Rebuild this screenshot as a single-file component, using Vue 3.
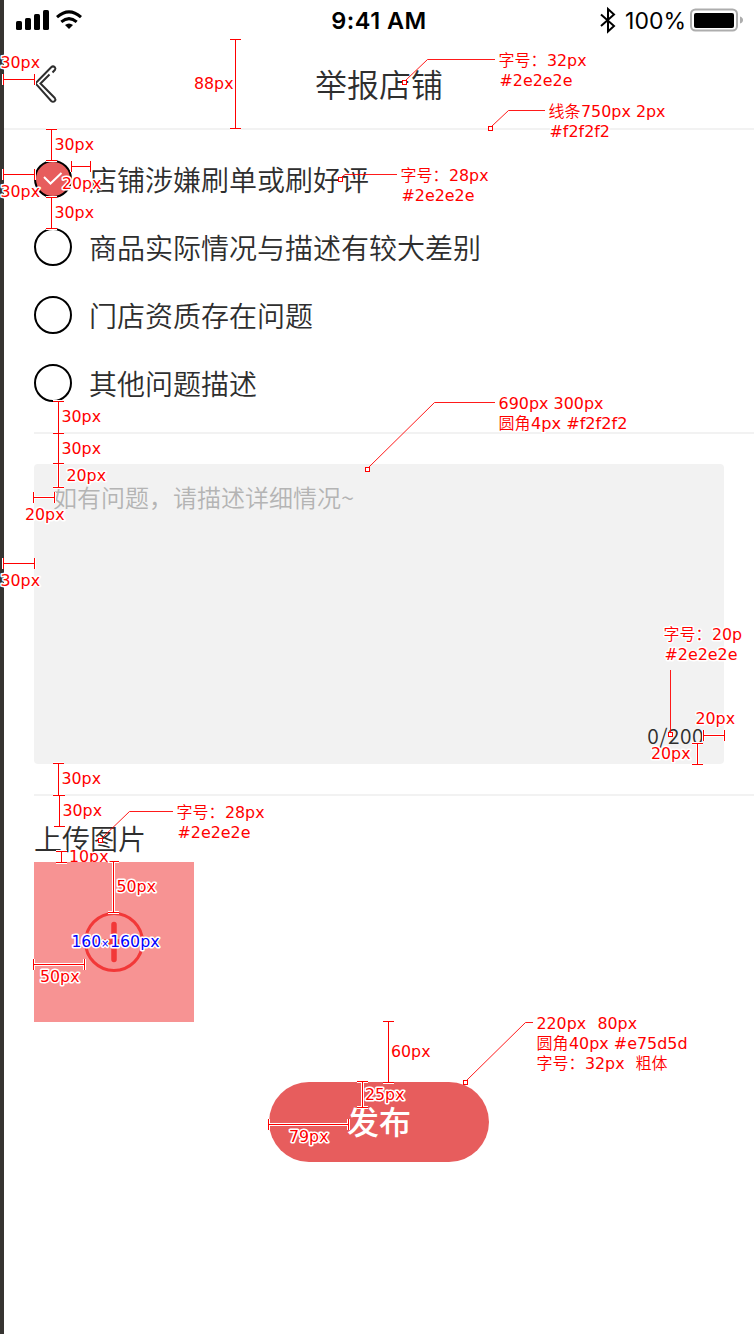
<script setup>
const options = [
  { text: '店铺涉嫌刷单或刷好评', checked: true },
  { text: '商品实际情况与描述有较大差别', checked: false },
  { text: '门店资质存在问题', checked: false },
  { text: '其他问题描述', checked: false },
]

// vertical measures: x, top, bottom
const vertical = [
  [235, 39, 128], [51, 129, 160], [51, 197, 228], [58, 401, 433], [58, 433, 463],
  [58, 463, 487], [697, 743, 764], [58, 763, 795], [59, 795, 826], [61, 851, 862],
  [113, 861, 912], [388, 1021, 1082], [362, 1081, 1107],
].map(([x, a, b]) => `M${x + 0.5} ${a}V${b + 1}M${x - 5} ${a + 0.5}h11M${x - 5} ${b + 0.5}h11`)

// horizontal measures: y, left, right
const horizontal = [
  [79, 3, 34], [174, 3, 34], [166, 71, 90], [497, 33, 54], [563, 3, 34],
  [735, 703, 724], [964, 33, 84], [1124, 268, 348],
].map(([y, a, b]) => `M${a} ${y + 0.5}H${b + 1}M${a + 0.5} ${y - 5}v11M${b + 0.5} ${y - 5}v11`)

const measures = [...vertical, ...horizontal]

const sizes = [
  ['88px', 194.5, 89], ['30px', 55, 150], ['30px', 55, 218], ['30px', 62, 422],
  ['30px', 62, 454], ['20px', 67, 481], ['20px', 651.5, 759], ['30px', 62, 784],
  ['30px', 63, 816], ['50px', 117, 892], ['60px', 391.5, 1057],
  ['25px', 365.5, 1100], ['30px', 1, 68], ['30px', 1, 197], ['20px', 62.5, 189],
  ['20px', 25.5, 520], ['30px', 1, 586], ['20px', 696, 724], ['50px', 40.5, 982],
  ['79px', 289.5, 1142],
]

const leaders = [
  { x: 404, y: 82, d: 'M406 80L427.5 59.5H495' },
  { x: 490, y: 128, d: 'M492 126L508.5 110.5H545' },
  { x: 340, y: 179, d: 'M342 177L345 174.5H397' },
  { x: 367, y: 469, d: 'M369 467L434.5 402.5H495' },
  { x: 670, y: 734, d: 'M670.5 732V670' },
  { x: 100, y: 840, d: 'M102 838L129.5 811.5H173' },
  { x: 465, y: 1082, d: 'M467 1080L525.5 1022.5H533' },
]

// text, x, baseline, width
const notes = [
  ['字号：', 498.5, 66, 48], ['32px', 547, 66, 39.5], ['#2e2e2e', 499.5, 86, 73],
  ['线条', 548.5, 117, 32], ['750px 2px', 581, 117, 84.5], ['#f2f2f2', 549.5, 137, 60.5],
  ['字号：', 400.5, 181, 48], ['28px', 449, 181, 39.5], ['#2e2e2e', 401.5, 201, 73],
  ['690px 300px', 498.5, 409, 105],
  ['圆角', 498.5, 429, 32], ['4px #f2f2f2', 531, 429, 96.5],
  ['字号：', 663.5, 640, 48], ['#2e2e2e', 664.5, 660, 73],
  ['字号：', 176.5, 818, 48], ['28px', 225, 818, 39.5], ['#2e2e2e', 177.5, 838, 73],
  ['220px', 536.5, 1029, 49.5], ['80px', 597.5, 1029, 39.5],
  ['圆角', 536.5, 1049, 32], ['40px #e75d5d', 569, 1049, 118.5],
  ['字号：', 536.5, 1069, 48], ['32px', 585, 1069, 39.5], ['粗体', 635.5, 1069, 32],
]
</script>

<template>
  <div class="page">
    <div class="edge"></div>
    <main class="screen">
      <header class="status">
        <div class="signal">
          <svg width="68" height="22" viewBox="0 0 68 22">
            <rect x="0" y="12" width="6" height="9" rx="1.6" />
            <rect x="9" y="9" width="6" height="12" rx="1.6" />
            <rect x="18" y="5" width="6" height="16" rx="1.6" />
            <rect x="27" y="1" width="6" height="20" rx="1.6" />
            <g fill="none" stroke="#000" stroke-width="3">
              <path d="M41 8.2Q53 -2.4 65 8.2" />
              <path d="M45.3 12.9Q53 6.4 60.7 12.9" />
            </g>
            <path d="M49 16Q53 12.8 57 16L53 20Z" />
          </svg>
        </div>
        <div class="time">9:41 AM</div>
        <div class="power">
          <svg class="bluetooth" width="16" height="28" viewBox="0 0 16 28">
            <path d="M1 8.5L14 20L8 25.5V3L14 8.5L1 20" fill="none" stroke="#000" stroke-width="2" />
          </svg>
          <span class="percent">100%</span>
          <svg width="54" height="24" viewBox="0 0 54 24">
            <rect x="1" y="1.5" width="46" height="21" rx="4.5" fill="none" stroke="#adadad" stroke-width="2" />
            <rect x="4" y="5" width="40" height="15" rx="2" />
            <path d="M50 8.5Q53 9.5 53 12T50 15.5Z" fill="#adadad" />
          </svg>
        </div>
      </header>

      <nav class="nav">
        <svg class="back" width="24" height="40" viewBox="0 0 24 40">
          <path d="M18.5 8.5L21 5.8Q21.9 4.5 20.8 3.2Q19 1.5 17.2 3.2L1.5 19.3L17.2 37Q19 38.6 20.8 37Q22 35.5 20.8 34L6.5 19.5L15.5 10.5" fill="none" stroke="#2e2e2e" stroke-width="2" />
        </svg>
        <h1>举报店铺</h1>
      </nav>

      <ul class="options">
        <li v-for="option in options" :key="option.text">
          <span class="radio" :class="{ checked: option.checked }">
            <svg v-if="option.checked" width="20" height="14" viewBox="0 0 20 14">
              <path d="M1 5L7.5 11.5L18.5 1" fill="none" stroke="#fff" stroke-width="2" />
            </svg>
          </span>
          <span class="label">{{ option.text }}</span>
        </li>
      </ul>

      <section class="detail">
        <div class="textarea">
          <p>如有问题，请描述详细情况~</p>
          <span class="counter">0/200</span>
        </div>
      </section>

      <section class="upload">
        <h2>上传图片</h2>
        <div class="tile">
          <svg width="60" height="60" viewBox="0 0 60 60" fill="none" stroke="#f23838">
            <circle cx="30" cy="30" r="28.5" stroke-width="3" />
            <path d="M30 12.5V47.5M12.5 30H47.5" stroke-width="5.5" stroke-linecap="round" />
          </svg>
        </div>
      </section>

      <button class="submit">发布</button>
    </main>

    <svg class="marks" width="754" height="1334" viewBox="0 0 754 1334">
      <defs>
        <clipPath id="above-tile"><rect x="60" y="845" width="60" height="17" /></clipPath>
        <clipPath id="note-edge"><rect x="700" y="620" width="42" height="30" /></clipPath>
      </defs>
      <g fill="none">
        <path v-for="d in measures" :key="'halo' + d" :d="d" stroke="#fff" stroke-width="3" />
        <path v-for="d in measures" :key="d" :d="d" stroke="#f00" shape-rendering="crispEdges" />
      </g>
      <g v-for="leader in leaders" :key="leader.d" fill="none" stroke="#f00">
        <path :d="leader.d" stroke-width="0.9" />
        <rect :x="leader.x - 1.5" :y="leader.y - 1.5" width="4" height="4" fill="#fff" />
      </g>
      <g class="texts">
        <text v-for="([text, x, y], i) in sizes" :key="i" :x="x - 0.5" :y="y" textLength="39.5" lengthAdjust="spacingAndGlyphs">{{ text }}</text>
        <text v-for="([text, x, y, w], i) in notes" :key="'n' + i" :x="x" :y="y" :textLength="w" lengthAdjust="spacingAndGlyphs">{{ text }}</text>
        <g clip-path="url(#note-edge)"><text x="712" y="640" textLength="39.5" lengthAdjust="spacingAndGlyphs">20px</text></g>
        <g clip-path="url(#above-tile)"><text x="69" y="862" textLength="39.5" lengthAdjust="spacingAndGlyphs">10px</text></g>
        <text class="blue" x="71.5" y="947" textLength="29.5" lengthAdjust="spacingAndGlyphs">160</text>
        <text class="blue times" x="101" y="947">×</text>
        <text class="blue" x="110" y="947" textLength="49.5" lengthAdjust="spacingAndGlyphs">160px</text>
      </g>
    </svg>
  </div>
</template>

<style>
body {
  margin: 0;
  background: #fff;
}
</style>

<style scoped>
.page {
  position: relative;
  display: flex;
  width: 754px;
  height: 1334px;
  overflow: hidden;
  font-family: "Noto Sans CJK SC", sans-serif;
  color: #2e2e2e;
}
.edge {
  width: 4px;
  background: #363431;
}
.screen {
  display: flex;
  flex-direction: column;
  width: 750px;
  background: #fff;
}
.status {
  display: grid;
  grid-template-columns: 1fr auto 1fr;
  align-items: center;
  height: 40px;
  color: #000;
  font-family: Inter, sans-serif;
  font-size: 23.5px;
}
.signal {
  display: flex;
  padding: 0 0 1px 12px;
}
.time {
  font-weight: 600;
  letter-spacing: 0.5px;
}
.power {
  display: flex;
  align-items: center;
  justify-content: flex-end;
  padding-right: 10px;
}
.bluetooth {
  margin-right: 9px;
}
.percent {
  margin-right: 4px;
  padding-top: 2px;
  font-size: 23px;
}
.nav {
  display: grid;
  grid-template-columns: 1fr auto 1fr;
  align-items: center;
  height: 88px;
  border-bottom: 2px solid #f2f2f2;
}
.back {
  margin-left: 30px;
}
h1,
h2,
p,
ul {
  margin: 0;
  padding: 0;
  font-weight: 350;
}
h1 {
  padding-bottom: 3px;
  font-size: 32px;
  line-height: 44px;
}
.options {
  display: flex;
  flex-direction: column;
  gap: 30px;
  padding: 30px 0 30px 30px;
  list-style: none;
}
.options li {
  display: flex;
  align-items: center;
  gap: 17px;
  height: 38px;
}
.radio {
  display: flex;
  align-items: center;
  justify-content: center;
  box-sizing: border-box;
  width: 38px;
  height: 38px;
  border: 2px solid #000;
  border-radius: 50%;
}
.checked {
  background: #e75d5d;
}
.label {
  font-size: 28px;
  font-weight: 350;
  line-height: 38px;
}
.detail {
  margin-left: 30px;
  padding: 30px 30px 30px 0;
  border-top: 2px solid #f2f2f2;
  border-bottom: 2px solid #f2f2f2;
}
.textarea {
  display: flex;
  flex-direction: column;
  justify-content: space-between;
  box-sizing: border-box;
  width: 690px;
  height: 300px;
  padding: 15px 20px 15px 19px;
  border-radius: 4px;
  background: #f2f2f2;
}
.textarea p {
  color: #b4b4b4;
  font-size: 24px;
  line-height: 36px;
}
.counter {
  align-self: flex-end;
  font-size: 21px;
  font-weight: 350;
  letter-spacing: 0.5px;
  line-height: 28px;
}
.upload {
  padding: 22px 30px 60px;
}
h2 {
  height: 44px;
  font-size: 28px;
  line-height: 40px;
}
.tile {
  display: flex;
  align-items: center;
  justify-content: center;
  width: 160px;
  height: 160px;
  background: #f79393;
}
.submit {
  align-self: center;
  width: 220px;
  height: 80px;
  padding: 0 0 4px;
  border: 0;
  border-radius: 40px;
  background: #e75d5d;
  color: #fff;
  font: 500 32px/76px "Noto Sans CJK SC", sans-serif;
}
.marks {
  position: absolute;
  inset: 0;
}
.texts text {
  fill: #f00;
  stroke: #fff;
  stroke-width: 3px;
  stroke-linejoin: round;
  paint-order: stroke;
  font-family: "DejaVu Sans Condensed", "Noto Sans CJK SC", sans-serif;
  font-size: 16.3px;
  font-weight: 350;
  white-space: pre;
}
.texts .blue {
  fill: #00f;
}
.texts .times {
  font-size: 11px;
}
</style>
